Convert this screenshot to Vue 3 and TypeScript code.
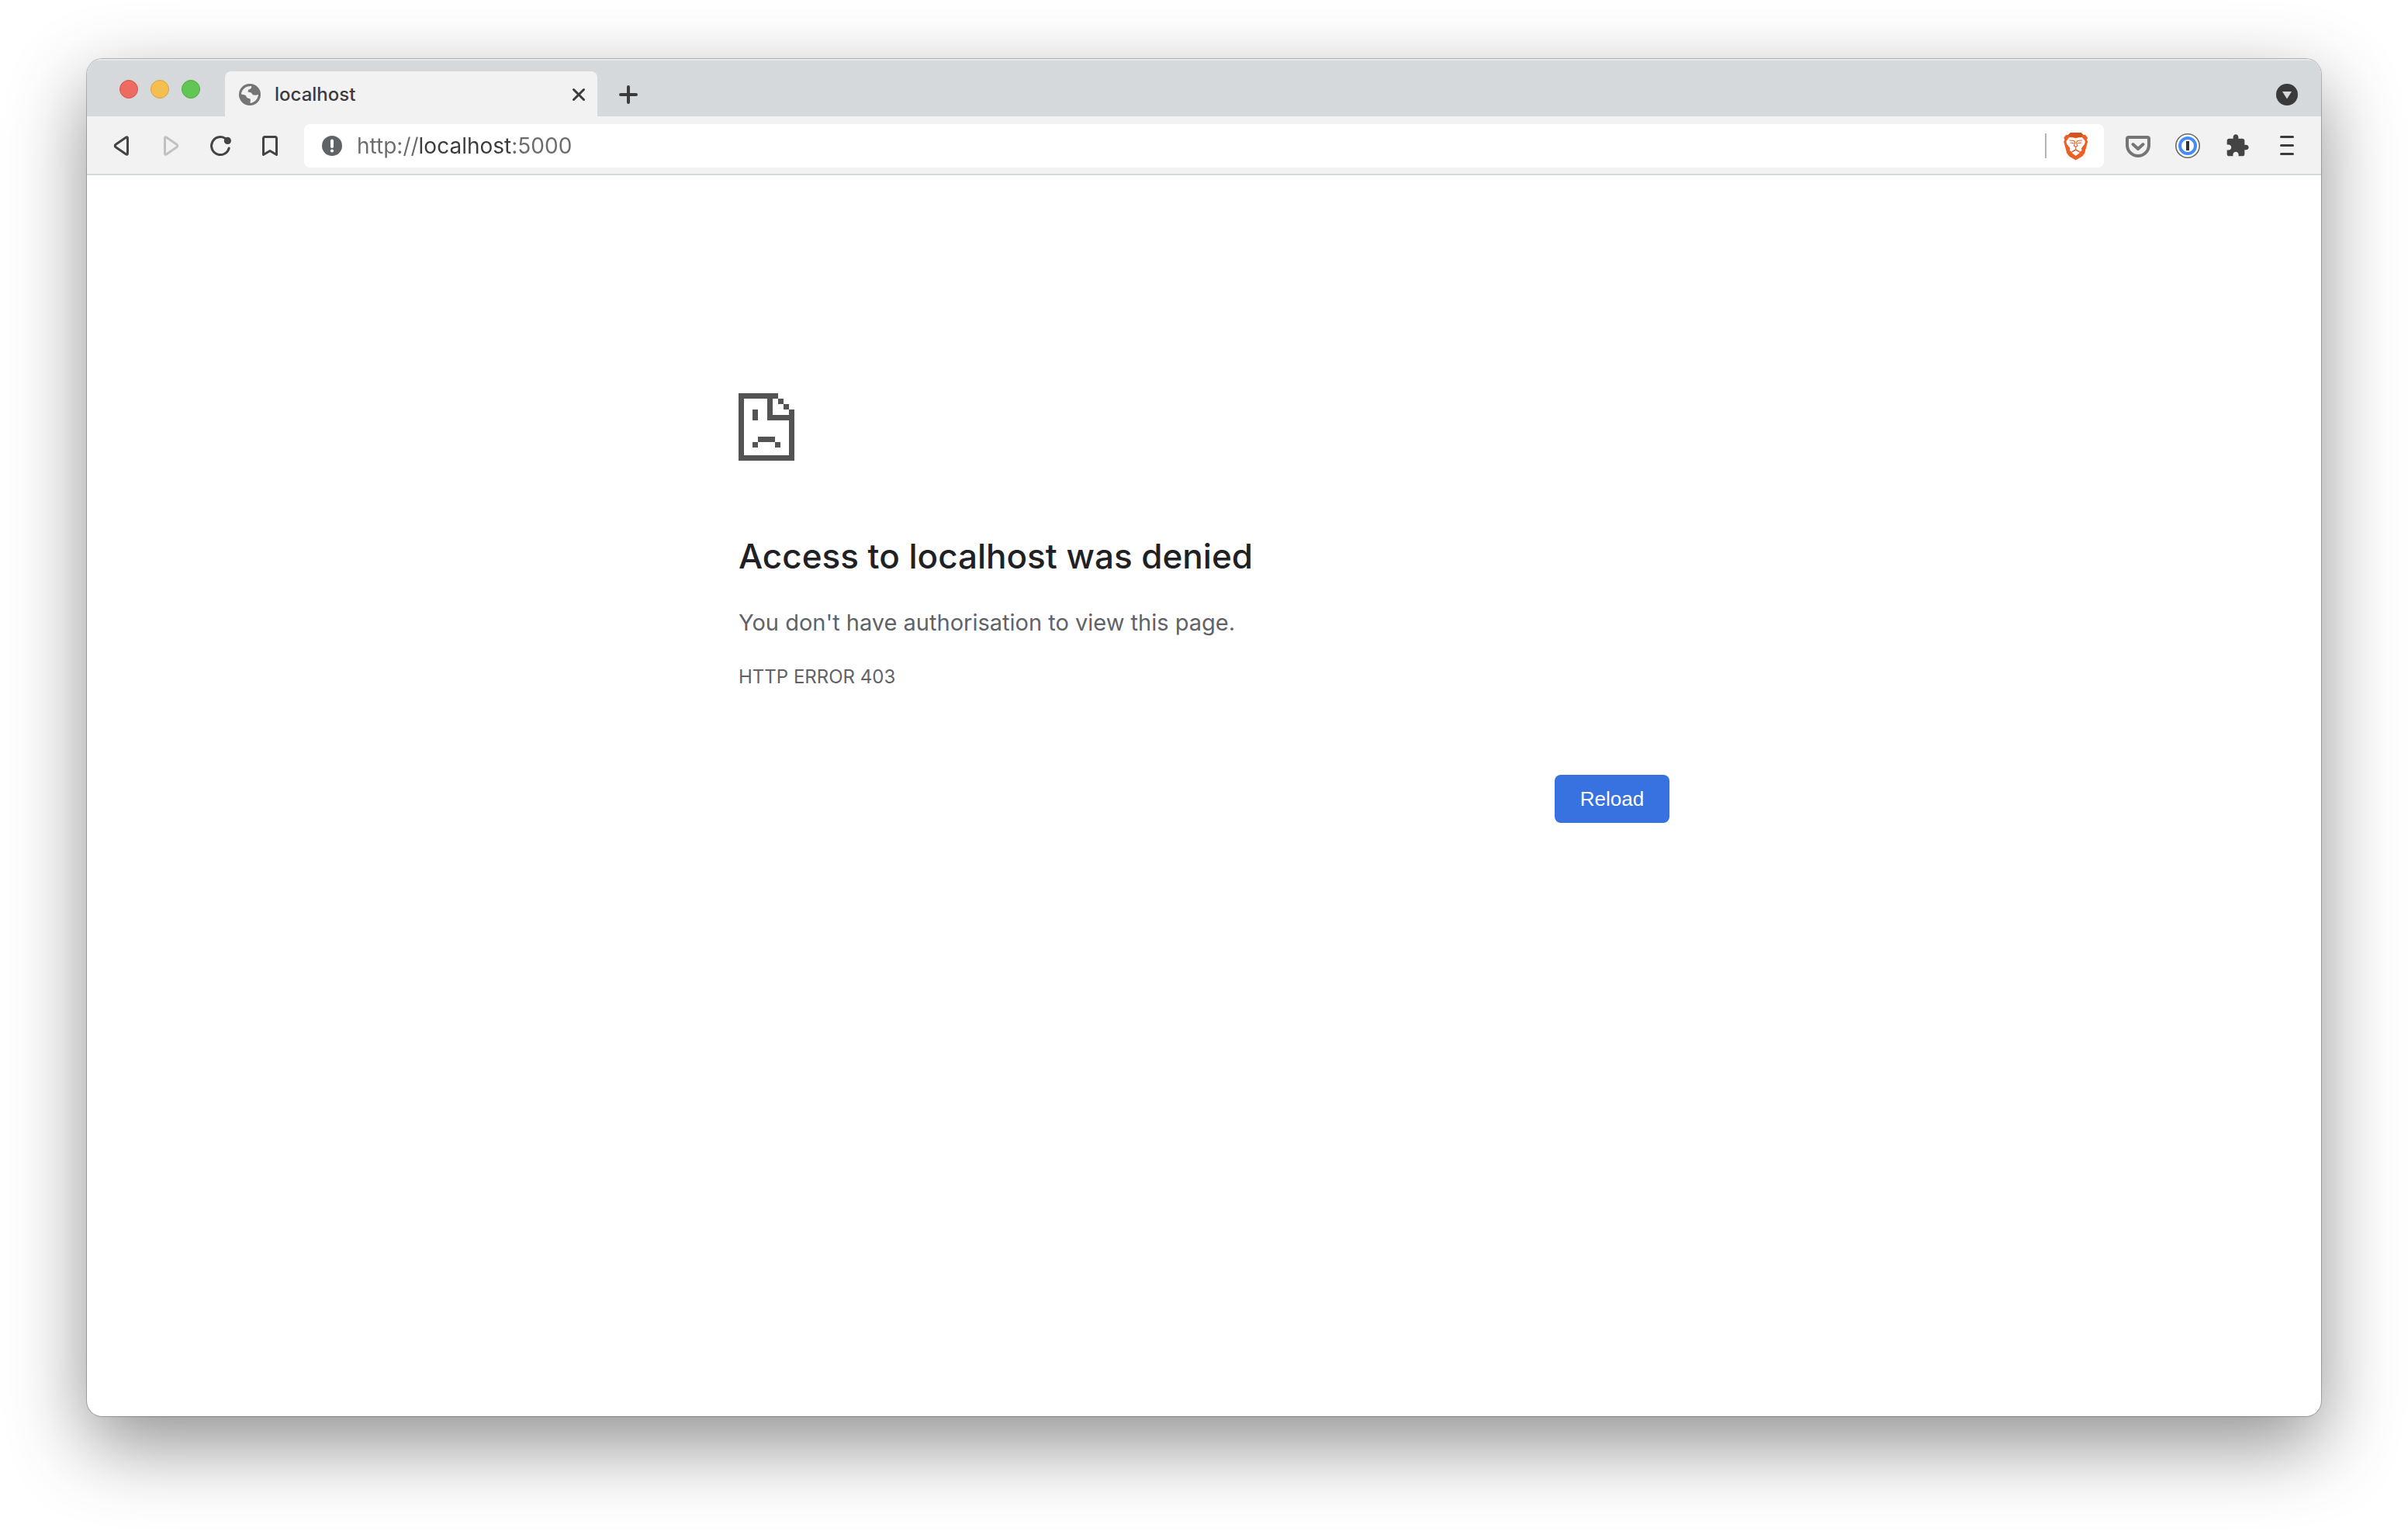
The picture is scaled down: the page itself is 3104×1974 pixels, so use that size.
<script setup lang="ts">
import { ref } from 'vue'

const tabTitle = 'localhost'
const address = ref('http://localhost:5000')
const lights: string[] = ['close', 'minimise', 'zoom']
</script>

<template>
  <div class="desktop">
    <div class="window">
      <header class="tabstrip">
        <div class="lights">
          <button v-for="name in lights" :key="name" type="button" :class="['light', name]" :aria-label="name"></button>
        </div>
        <div class="tab">
          <svg class="favicon" viewBox="0 0 28 28" aria-hidden="true">
            <circle cx="14" cy="14" r="14" fill="#757575" />
            <path d="M3 13.500C3.200 8 8 3 16 3c.8 3-1.500 4-3.500 4.500-.8.3-.5 2-1 3l3.500.8c2 .5 2 3.200 4 3.200 1.500 0 3 .5 6-.5-.3 5-4 9.500-9.500 11-1-.2-1.200-1.200-.8-2.300.5-1.600.3-3.200-1.200-3.700-2-.5-3.500-.7-4-2.500C9 14.500 7 14 3 13.500z" fill="#f2f2f2" />
          </svg>
          <span class="tab-title">{{ tabTitle }}</span>
          <button class="tab-close" type="button" aria-label="Close tab">
            <svg viewBox="0 0 20 20"><path d="M3.500 3.500l13 13M16.500 3.500l-13 13" stroke="#3b3b3b" stroke-width="3" stroke-linecap="round" /></svg>
          </button>
        </div>
        <button class="new-tab" type="button" aria-label="New tab">
          <svg viewBox="0 0 28 28"><path d="M14 4v20M4 14h20" stroke="#3b3b3b" stroke-width="4" stroke-linecap="round" /></svg>
        </button>
        <button class="tab-search" type="button" aria-label="Search tabs">
          <svg viewBox="0 0 28 28"><circle cx="14" cy="14" r="14" fill="#3a3a3a" /><path d="M8 10h12l-6 9.500z" fill="#d5d9dc" /></svg>
        </button>
      </header>

      <nav class="toolbar">
        <div class="tools">
          <button class="tool" type="button" aria-label="Back">
            <svg viewBox="0 0 32 32"><path d="M22.300 5.200L9.200 14.300a2 2 0 0 0 0 3.400L22.300 26.800Q24.500 28 24.500 25.800V6.200Q24.500 4 22.300 5.200z" fill="none" stroke="#444" stroke-width="3" stroke-linejoin="round" /></svg>
          </button>
          <button class="tool" type="button" aria-label="Forward" disabled>
            <svg viewBox="0 0 32 32"><path d="M10.700 5.200L23.800 14.300a2 2 0 0 1 0 3.400L10.700 26.800Q8.500 28 8.500 25.800V6.200Q8.500 4 10.700 5.200z" fill="none" stroke="#c1c1c1" stroke-width="3" stroke-linejoin="round" /></svg>
          </button>
          <button class="tool" type="button" aria-label="Reload page">
            <svg viewBox="0 0 32 32"><path d="M27.200 19A11.500 11.500 0 1 1 22 6.200" fill="none" stroke="#444" stroke-width="3" stroke-linecap="round" /><circle cx="25.400" cy="9.400" r="4.600" fill="#444" /></svg>
          </button>
          <button class="tool" type="button" aria-label="Bookmark this page">
            <svg viewBox="0 0 32 32"><path d="M7.500 6.500q0-2 2-2h13q2 0 2 2v21l-8.500-5-8.500 5z" fill="none" stroke="#444" stroke-width="3" stroke-linejoin="round" /></svg>
          </button>
        </div>

        <div class="address">
          <svg class="site-info" viewBox="0 0 32 32" aria-hidden="true">
            <circle cx="16" cy="16" r="13" fill="#5f6368" />
            <path d="M16 9.500v7.500" stroke="#fff" stroke-width="4" stroke-linecap="round" /><circle cx="16" cy="22.500" r="2.100" fill="#fff" />
          </svg>
          <input v-model="address" class="url" type="text" aria-label="Address" spellcheck="false" />
          <span class="divider"></span>
          <button class="shield" type="button" aria-label="Shields">
            <svg viewBox="0 0 36 40">
              <path d="M11 3h13.500l3 3 2.500-.3 3 3.800-1 3 1.200 2-4 15-3 4-8.500 5-8.500-5-3-4-4-15 1.200-2-1-3 3-3.800 2.500.3z" fill="#ee5f25" />
              <path d="M11 3h13.500l3 3-3 2.700H11L8 6z" fill="#d35420" />
              <path d="M9.500 9l4 .3 4.200.9 4.200-.9 4-.3 4 5-.6 3.500-4.300 5.500.5 3-2.500 1.700-5.300-3.500-5.300 3.500L9.900 26l.5-3-4.300-5.500-.6-3.500z" fill="#fff" />
              <path d="M12.500 29l5.200-3 5.200 3-5.200 4z" fill="#fff" />
              <path d="M9.500 13l6 .5 1.200 2-1.200 4.500 2.200 1.500 2.200-1.500-1.200-4.500 1.200-2 6-.5M10.500 16l4.500.6M25 16l-4.500.6M17.700 21.500v3.500M13 27.500l4.700-2.500 4.700 2.500" fill="none" stroke="#ee5f25" stroke-width="1.200" />
            </svg>
          </button>
        </div>

        <div class="tools">
          <button class="tool" type="button" aria-label="Save to Pocket">
            <svg viewBox="0 0 32 32"><path d="M4 5h24a2 2 0 0 1 2 2v8a14 14 0 0 1-28 0V7a2 2 0 0 1 2-2z" fill="none" stroke="#757575" stroke-width="4" /><path d="M9.500 14l6.500 6 6.500-6" fill="none" stroke="#757575" stroke-width="4" stroke-linecap="round" stroke-linejoin="round" /></svg>
          </button>
          <button class="tool" type="button" aria-label="Password manager">
            <svg viewBox="0 0 32 32"><circle cx="16" cy="16" r="15.200" fill="#fff" stroke="#666" stroke-width="1.600" /><circle cx="16" cy="16" r="10" fill="#fff" stroke="#448cfb" stroke-width="4" /><path d="M14 10h4v12h-4z" fill="#333" /></svg>
          </button>
          <button class="tool" type="button" aria-label="Extensions">
            <svg viewBox="0 0 24 24"><path d="M20.500 11H19V7c0-1.100-.9-2-2-2h-4V3.500C13 2.120 11.880 1 10.500 1S8 2.120 8 3.500V5H4c-1.100 0-1.990.9-1.990 2v3.800H3.500c1.490 0 2.700 1.210 2.700 2.700s-1.210 2.700-2.700 2.700H2V20c0 1.100.9 2 2 2h3.800v-1.500c0-1.490 1.210-2.700 2.700-2.700s2.700 1.210 2.700 2.700V22H17c1.100 0 2-.9 2-2v-4h1.500c1.380 0 2.500-1.120 2.500-2.500S21.880 11 20.500 11z" fill="#444" /></svg>
          </button>
          <button class="tool" type="button" aria-label="Menu">
            <svg viewBox="0 0 32 32"><path d="M8.500 4.500h15M8.500 15.500h15M8.500 26.500h15" stroke="#3b3b3b" stroke-width="3" stroke-linecap="round" /></svg>
          </button>
        </div>
      </nav>

      <main class="page">
        <div class="notice">
          <svg class="sad-page" viewBox="0 0 72 87" shape-rendering="crispEdges" aria-hidden="true">
            <path fill="#535353" d="M0 0h51v7H44v21h21v-7h7v66H0zM7 7v73h58V35H37V7zM51 7h7v7h-7zM58 14h7v7h-7zM18 21h7v14h-7zM25 56h22v7H25zM18 63h7v7h-7zM47 63h7v7h-7z" fill-rule="evenodd" />
          </svg>
          <h1>Access to localhost was denied</h1>
          <p class="summary">You don't have authorisation to view this page.</p>
          <p class="code">HTTP ERROR 403</p>
          <div class="actions">
            <button class="reload" type="button">Reload</button>
          </div>
        </div>
      </main>
    </div>
  </div>
</template>

<style>
body {
  background: #fff;
}
</style>

<style scoped>
.desktop {
  box-sizing: border-box;
  display: flex;
  min-height: 100vh;
  padding: 76px 112px 148px;
  font-family: Inter, 'Liberation Sans', sans-serif;
}
.window {
  display: flex;
  flex: 1;
  flex-direction: column;
  overflow: hidden;
  border-radius: 20px;
  background: #fff;
  box-shadow: 0 0 0 1px rgba(0, 0, 0, 0.24), 0 36px 100px rgba(0, 0, 0, 0.44);
}
button {
  display: flex;
  align-items: center;
  justify-content: center;
  padding: 0;
  border: 0;
  background: none;
}
svg {
  display: block;
}
.tabstrip {
  display: flex;
  align-items: flex-end;
  height: 74px;
  background: #d5d9dc;
  box-shadow: inset 0 2px 0 #e6e8ea;
}
.lights {
  display: flex;
  align-self: flex-start;
  gap: 16px;
  padding: 27px 32px 0 42px;
}
.light {
  box-sizing: border-box;
  width: 24px;
  height: 24px;
  border: 1px solid #d9544a;
  border-radius: 50%;
  background: #ed6b60;
}
.light.minimise {
  border-color: #dba33d;
  background: #f5bf4f;
}
.light.zoom {
  border-color: #50a93f;
  background: #62c655;
}
.tab {
  box-sizing: border-box;
  display: flex;
  align-items: center;
  width: 480px;
  height: 58px;
  padding: 2px 14px 0 18px;
  border-radius: 8px 8px 0 0;
  background: #f2f2f2;
}
.favicon {
  width: 28px;
  height: 28px;
}
.tab-title {
  flex: 1;
  margin-left: 18px;
  color: #3b3b3b;
  font-size: 24px;
  font-weight: 500;
  line-height: 32px;
}
.tab-close svg {
  width: 20px;
  height: 20px;
}
.new-tab,
.tab-search {
  height: 56px;
}
.new-tab {
  margin-left: 26px;
}
.tab-search {
  margin: 0 30px 0 auto;
}
.new-tab svg,
.tab-search svg {
  width: 28px;
  height: 28px;
}
.toolbar {
  display: flex;
  gap: 12px;
  padding: 10px 12px 8px;
  border-bottom: 2px solid #d5d9dc;
  background: #f2f2f2;
}
.tools {
  display: flex;
}
.tool {
  width: 64px;
  height: 56px;
}
.tool svg {
  width: 32px;
  height: 32px;
}
.address {
  display: flex;
  flex: 1;
  align-items: center;
  height: 56px;
  padding: 0 18px 0 20px;
  box-sizing: border-box;
  border-radius: 8px;
  background: #fff;
}
.site-info {
  width: 32px;
  height: 32px;
}
.url {
  flex: 1;
  min-width: 0;
  height: 40px;
  margin-left: 16px;
  padding: 0;
  border: 0;
  outline: 0;
  /* scheme and port are lighter than the host name */
  background: linear-gradient(to right, #6b6b6b 80px, #3b3b3b 80px 201px, #6b6b6b 201px);
  -webkit-background-clip: text;
  background-clip: text;
  color: transparent;
  caret-color: #3b3b3b;
  font-family: inherit;
  font-size: 28px;
}
.divider {
  width: 2px;
  height: 32px;
  margin-right: 20px;
  background: #b4b4b4;
}
.shield svg {
  width: 36px;
  height: 40px;
}
.page {
  flex: 1;
  padding: 281px 48px 48px;
}
.notice {
  max-width: 1200px;
  margin: 0 auto;
}
.sad-page {
  width: 72px;
  height: 87px;
}
h1 {
  margin: 93px 0 0;
  color: #202124;
  font-size: 44px;
  font-weight: 500;
  line-height: 60px;
}
.summary,
.code {
  color: #5f6368;
}
.summary {
  margin: 32px 0 0;
  font-size: 29px;
  line-height: 48px;
}
.code {
  margin: 28px 0 0;
  font-size: 24px;
  line-height: 36px;
}
.actions {
  display: flex;
  justify-content: flex-end;
  margin-top: 108px;
}
.reload {
  min-width: 148px;
  height: 62px;
  padding: 0 32px;
  border-radius: 8px;
  background: #3871e0;
  color: #fff;
  font-family: 'Liberation Sans', Arial, sans-serif;
  font-size: 26px;
}
</style>
